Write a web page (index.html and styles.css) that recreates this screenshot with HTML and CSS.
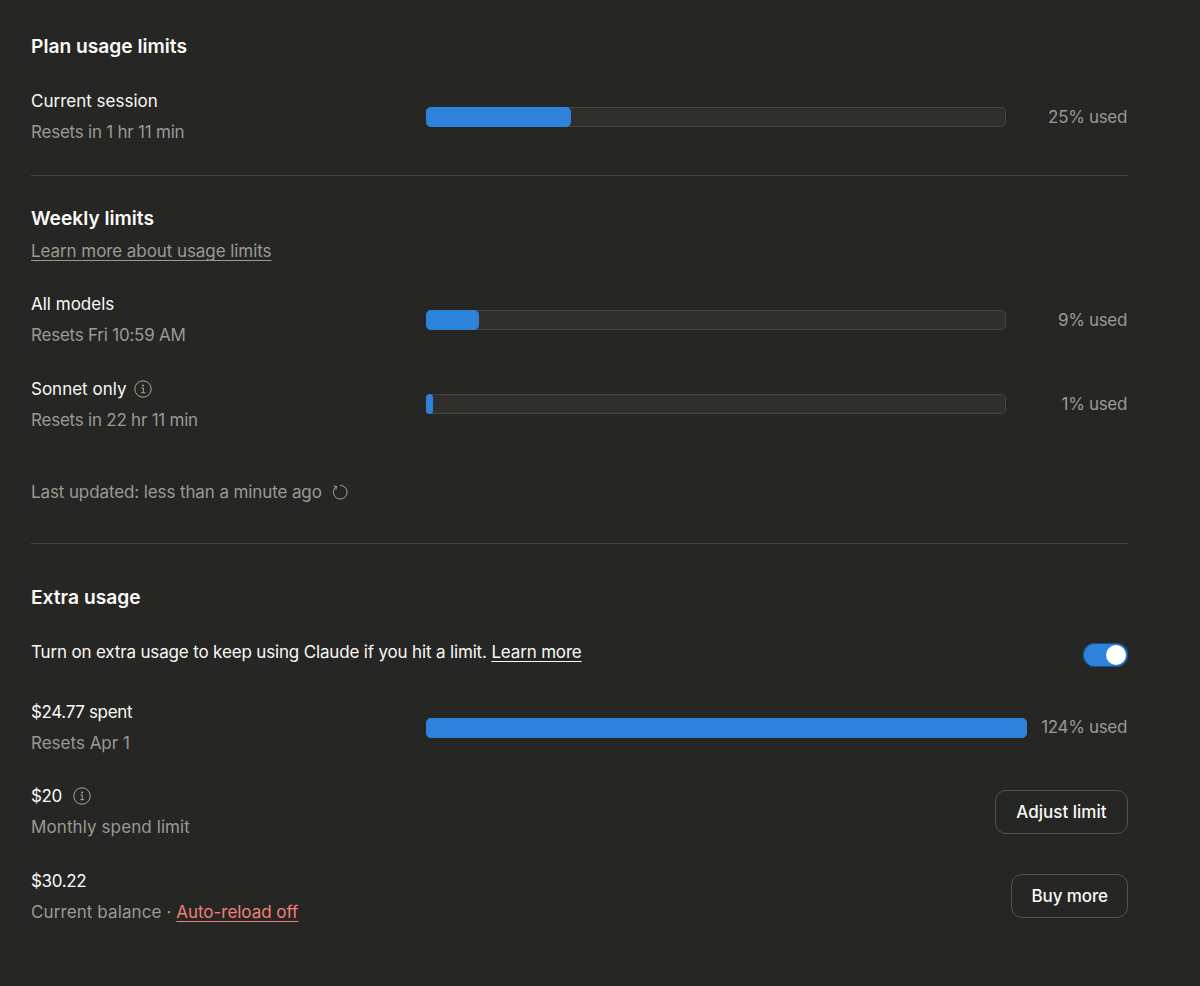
FILE: index.html
```html
<!DOCTYPE html>
<html lang="en">
<head>
<meta charset="utf-8">
<title>Usage</title>
<link rel="stylesheet" href="styles.css">
</head>
<body>
<main class="page">
  <section class="section first">
    <h2 class="title">Plan usage limits</h2>
    <div class="rows">
      <div class="row">
        <div class="label"><div class="name">Current session</div><div class="sub tight">Resets in 1 hr 11 min</div></div>
        <div class="bar"><div class="fill" style="width:25%"></div></div>
        <div class="pct">25% used</div>
      </div>
    </div>
  </section>
  <hr class="rule">
  <section class="section">
    <h2 class="title">Weekly limits</h2>
    <a class="link learn">Learn more about usage limits</a>
    <div class="rows weekly">
      <div class="row">
        <div class="label"><div class="name">All models</div><div class="sub tight">Resets Fri 10:59 AM</div></div>
        <div class="bar"><div class="fill" style="width:9.2%"></div></div>
        <div class="pct">9% used</div>
      </div>
      <div class="row">
        <div class="label"><div class="name">Sonnet only
          <svg class="icon" viewBox="0 0 18 18"><circle cx="9" cy="9" r="8.2"/><path d="M7.4 8h1.9v4.6M7.2 12.7h4.1"/><circle class="dot" cx="9" cy="5.4" r="1"/></svg></div>
          <div class="sub tight">Resets in 22 hr 11 min</div></div>
        <div class="bar"><div class="fill" style="width:1.2%"></div></div>
        <div class="pct">1% used</div>
      </div>
    </div>
    <div class="updated">Last updated: less than a minute ago
      <svg class="refresh" viewBox="0 0 16 16"><path d="M4.4 2.6A6.8 6.8 0 1 0 8 1.4"/><path d="M1.6 1.8l3 .7-.7 3"/></svg></div>
  </section>
  <hr class="rule lower">
  <section class="section">
    <h2 class="title">Extra usage</h2>
    <div class="toggle-row">
      <div class="name">Turn on extra usage to keep using Claude if you hit a limit. <a class="link white">Learn more</a></div>
      <div class="toggle"><div class="knob"></div></div>
    </div>
    <div class="rows extra">
      <div class="row">
        <div class="label"><div class="name money">$24.77 spent</div><div class="sub">Resets Apr 1</div></div>
        <div class="bar over"><div class="fill full"></div></div>
        <div class="pct auto">124% used</div>
      </div>
      <div class="row between">
        <div class="label"><div class="name money">$20
          <svg class="icon" viewBox="0 0 18 18"><circle cx="9" cy="9" r="8.2"/><path d="M7.4 8h1.9v4.6M7.2 12.7h4.1"/><circle class="dot" cx="9" cy="5.4" r="1"/></svg></div>
          <div class="sub wide">Monthly spend limit</div></div>
        <button class="btn">Adjust limit</button>
      </div>
      <div class="row between">
        <div class="label"><div class="name money">$30.22</div><div class="sub wide">Current balance · <a class="link red">Auto-reload off</a></div></div>
        <button class="btn small">Buy more</button>
      </div>
    </div>
  </section>
</main>
</body>
</html>
```
FILE: styles.css
```css
* { box-sizing: border-box; }
html, body { margin: 0; height: 100%; }
body {
  background: #262624;
  color: #faf9f5;
  font-family: Inter, "Noto Sans", sans-serif;
  font-size: 17px;
  line-height: 24px;
}
.page { padding: 34px 72px 0 31px; }
.title { margin: 0; font-size: 19.2px; line-height: 24px; font-weight: 600; color: #fbfaf6; }
.rows { display: flex; flex-direction: column; gap: 29.5px; margin-top: 31px; }
.rows.weekly { margin-top: 29px; }
.rows.extra { margin-top: 33px; }
.row { display: flex; align-items: center; }
.row.between { justify-content: space-between; }
.label { width: 395px; flex: none; }
.name { font-size: 17px; line-height: 24px; display: flex; align-items: center; gap: 8px; }
.money { letter-spacing: -0.35px; gap: 11px; }
.sub { margin-top: 7px; line-height: 24px; color: #9c9a92; }
.tight { letter-spacing: -0.23px; }
.wide { letter-spacing: 0.1px; }
.bar { flex: 1; height: 20px; background: #302f2e; border: 1px solid #454542; border-radius: 5px; }
.bar.over { margin-top: 2px; }
.fill { height: calc(100% + 2px); margin: -1px; background: #2d83dc; border-radius: 5px; }
.fill.full { width: calc(100% + 2px); }
.pct { flex: none; width: 122px; padding-right: 1px; text-align: right; color: #9c9a92; letter-spacing: -0.33px; }
.pct.auto { width: auto; margin-left: 14px; }
.rule { margin: 31px 0 30px; height: 1px; border: 0; background: #434341; }
.rule.lower { margin: 39px 0 41px; }
.link { text-decoration: underline; text-underline-offset: 3px; text-decoration-thickness: 1px; }
.learn { display: block; margin-top: 9px; color: #9c9a92; letter-spacing: -0.07px; }
.white { color: #faf9f5; }
.red { color: #f07f7b; letter-spacing: -0.03px; }
.icon { width: 18px; height: 18px; fill: none; stroke: #a8a69e; stroke-width: 1; }
.icon .dot { fill: #a8a69e; stroke: none; }
.updated { margin-top: 48px; color: #9c9a92; display: flex; align-items: center; gap: 10px; letter-spacing: -0.11px; }
.refresh { width: 16px; height: 16px; fill: none; stroke: #a8a69e; stroke-width: 1; }
.toggle-row { display: flex; justify-content: space-between; align-items: flex-start; margin-top: 31px; letter-spacing: -0.16px; }
.toggle-row .name { display: block; }
.toggle { margin-top: 3px; width: 45px; height: 24px; border-radius: 12px; background: #2d83dc; box-shadow: inset 0 0 0 1px #1c4f86; display: flex; justify-content: flex-end; align-items: center; padding-right: 2px; }
.knob { width: 20px; height: 20px; border-radius: 50%; background: #fff; }
.btn { font: inherit; font-weight: 500; color: #faf9f5; background: transparent; border: 1px solid #53524f; border-radius: 11px; height: 44px; padding: 0 20.5px; }
.btn.small { padding: 0 19px; letter-spacing: -0.1px; }
```
